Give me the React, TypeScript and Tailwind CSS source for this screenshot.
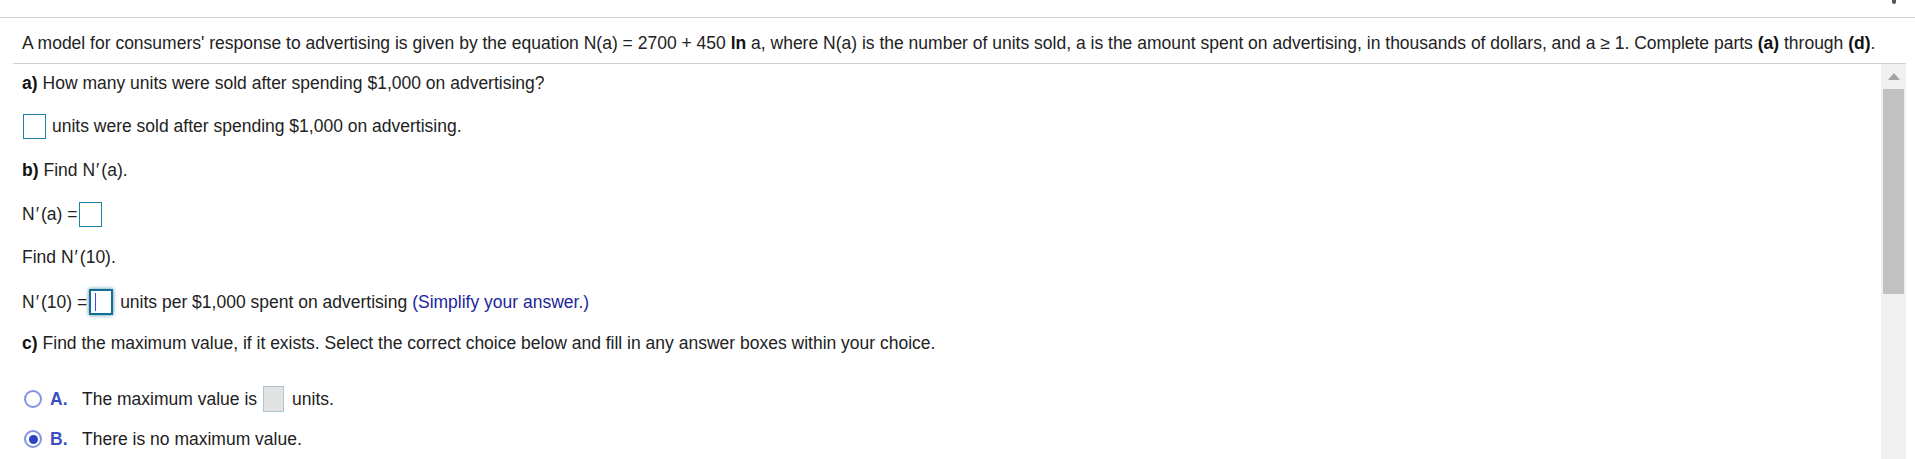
import React from "react";

const font = { fontFamily: '"Liberation Sans", Arial, sans-serif' };

function Box({ className = "" }: { className?: string }) {
  return <span className={"inline-block border border-[#1f7fa5] bg-white " + className} />;
}

function P() {
  return <span className="ml-[1px] mr-[2px]">′</span>;
}

export default function App() {
  return (
    <div className="w-[1915px] h-[459px] bg-white overflow-hidden text-[17.5px] text-[#222]" style={font}>
      {/* top strip */}
      <div className="h-[18px] border-b border-[#d0d1d8] flex justify-end">
        <span className="mr-[19px] w-[4px] h-[4px] bg-[#555] rounded-b-sm" />
      </div>
      {/* header */}
      <div className="ml-[13px] mr-[9px] h-[46px] border-b border-[#d0d1d8] flex items-center pl-[9px] pt-[5px] whitespace-nowrap">
        A model for consumers' response to advertising is given by the equation N(a) = 2700 + 450&nbsp;<b className="text-[#111]">ln</b>&nbsp;a, where N(a) is the number of units sold, a is the amount spent on advertising, in thousands of dollars, and a ≥ 1. Complete parts&nbsp;<b className="text-[#111]">(a)</b>&nbsp;through&nbsp;<b className="text-[#111]">(d)</b>.
      </div>
      {/* body */}
      <div className="flex h-[395px]">
        <div className="flex-1 flex flex-col pl-[22px] whitespace-nowrap">
          <div className="h-[38px] flex items-center">
            <b className="text-[#111] mr-[5px]">a)</b> How many units were sold after spending $1,000 on advertising?
          </div>
          <div className="h-[48px] flex items-center pl-[1px]">
            <Box className="w-[23px] h-[25px] mr-[6px]" />
            units were sold after spending $1,000 on advertising.
          </div>
          <div className="h-[41px] flex items-center">
            <b className="text-[#111] mr-[5px]">b)</b> Find N<P />(a).
          </div>
          <div className="h-[46px] flex items-center">
            N<P />(a) =<Box className="w-[23px] h-[25px] ml-[2px]" />
          </div>
          <div className="h-[40px] flex items-center">Find N<P />(10).</div>
          <div className="h-[50px] flex items-center">
            N<P />(10) =
            <span className="ml-[2px] mr-[7px] w-[24px] h-[26px] border-2 border-[#106f93] bg-white shadow-[0_0_4px_rgba(16,111,147,0.8)] flex items-center pl-[4px]">
              <span className="w-[1px] h-[18px] bg-[#2d55d6]" />
            </span>
            units per $1,000 spent on advertising<span className="ml-[5px] text-[#23269b]">(Simplify your answer.)</span>
          </div>
          <div className="h-[32px] flex items-center">
            <b className="text-[#111] mr-[5px]">c)</b> Find the maximum value, if it exists. Select the correct choice below and fill in any answer boxes within your choice.
          </div>
          <div className="h-[20px]" />
          <div className="h-[40px] flex items-center">
            <span className="ml-[2px] w-[18px] h-[18px] rounded-full border-2 border-[#8593e3] bg-white" />
            <b className="ml-[8px] w-[32px] text-[#3b4ec4]">A.</b>
            The maximum value is
            <span className="ml-[6px] mr-[8px] w-[21px] h-[26px] border border-[#a9c7d3] bg-[#e2e2e2]" />
            units.
          </div>
          <div className="h-[40px] flex items-center">
            <span className="ml-[2px] w-[18px] h-[18px] rounded-full border-2 border-[#8593e3] bg-white flex items-center justify-center">
              <span className="w-[9px] h-[9px] rounded-full bg-[#2c43c2]" />
            </span>
            <b className="ml-[8px] w-[32px] text-[#3b4ec4]">B.</b>
            There is no maximum value.
          </div>
        </div>
        {/* scrollbar */}
        <div className="w-[25px] mr-[9px] bg-[#f0f0f0] flex flex-col items-center">
          <div className="h-[25px] flex items-center justify-center">
            <svg width="12" height="7" viewBox="0 0 12 7"><path d="M6 0 L12 7 L0 7 Z" fill="#a3a3a3" /></svg>
          </div>
          <div className="w-[21px] h-[205px] bg-[#c1c1c1]" />
        </div>
      </div>
    </div>
  );
}
